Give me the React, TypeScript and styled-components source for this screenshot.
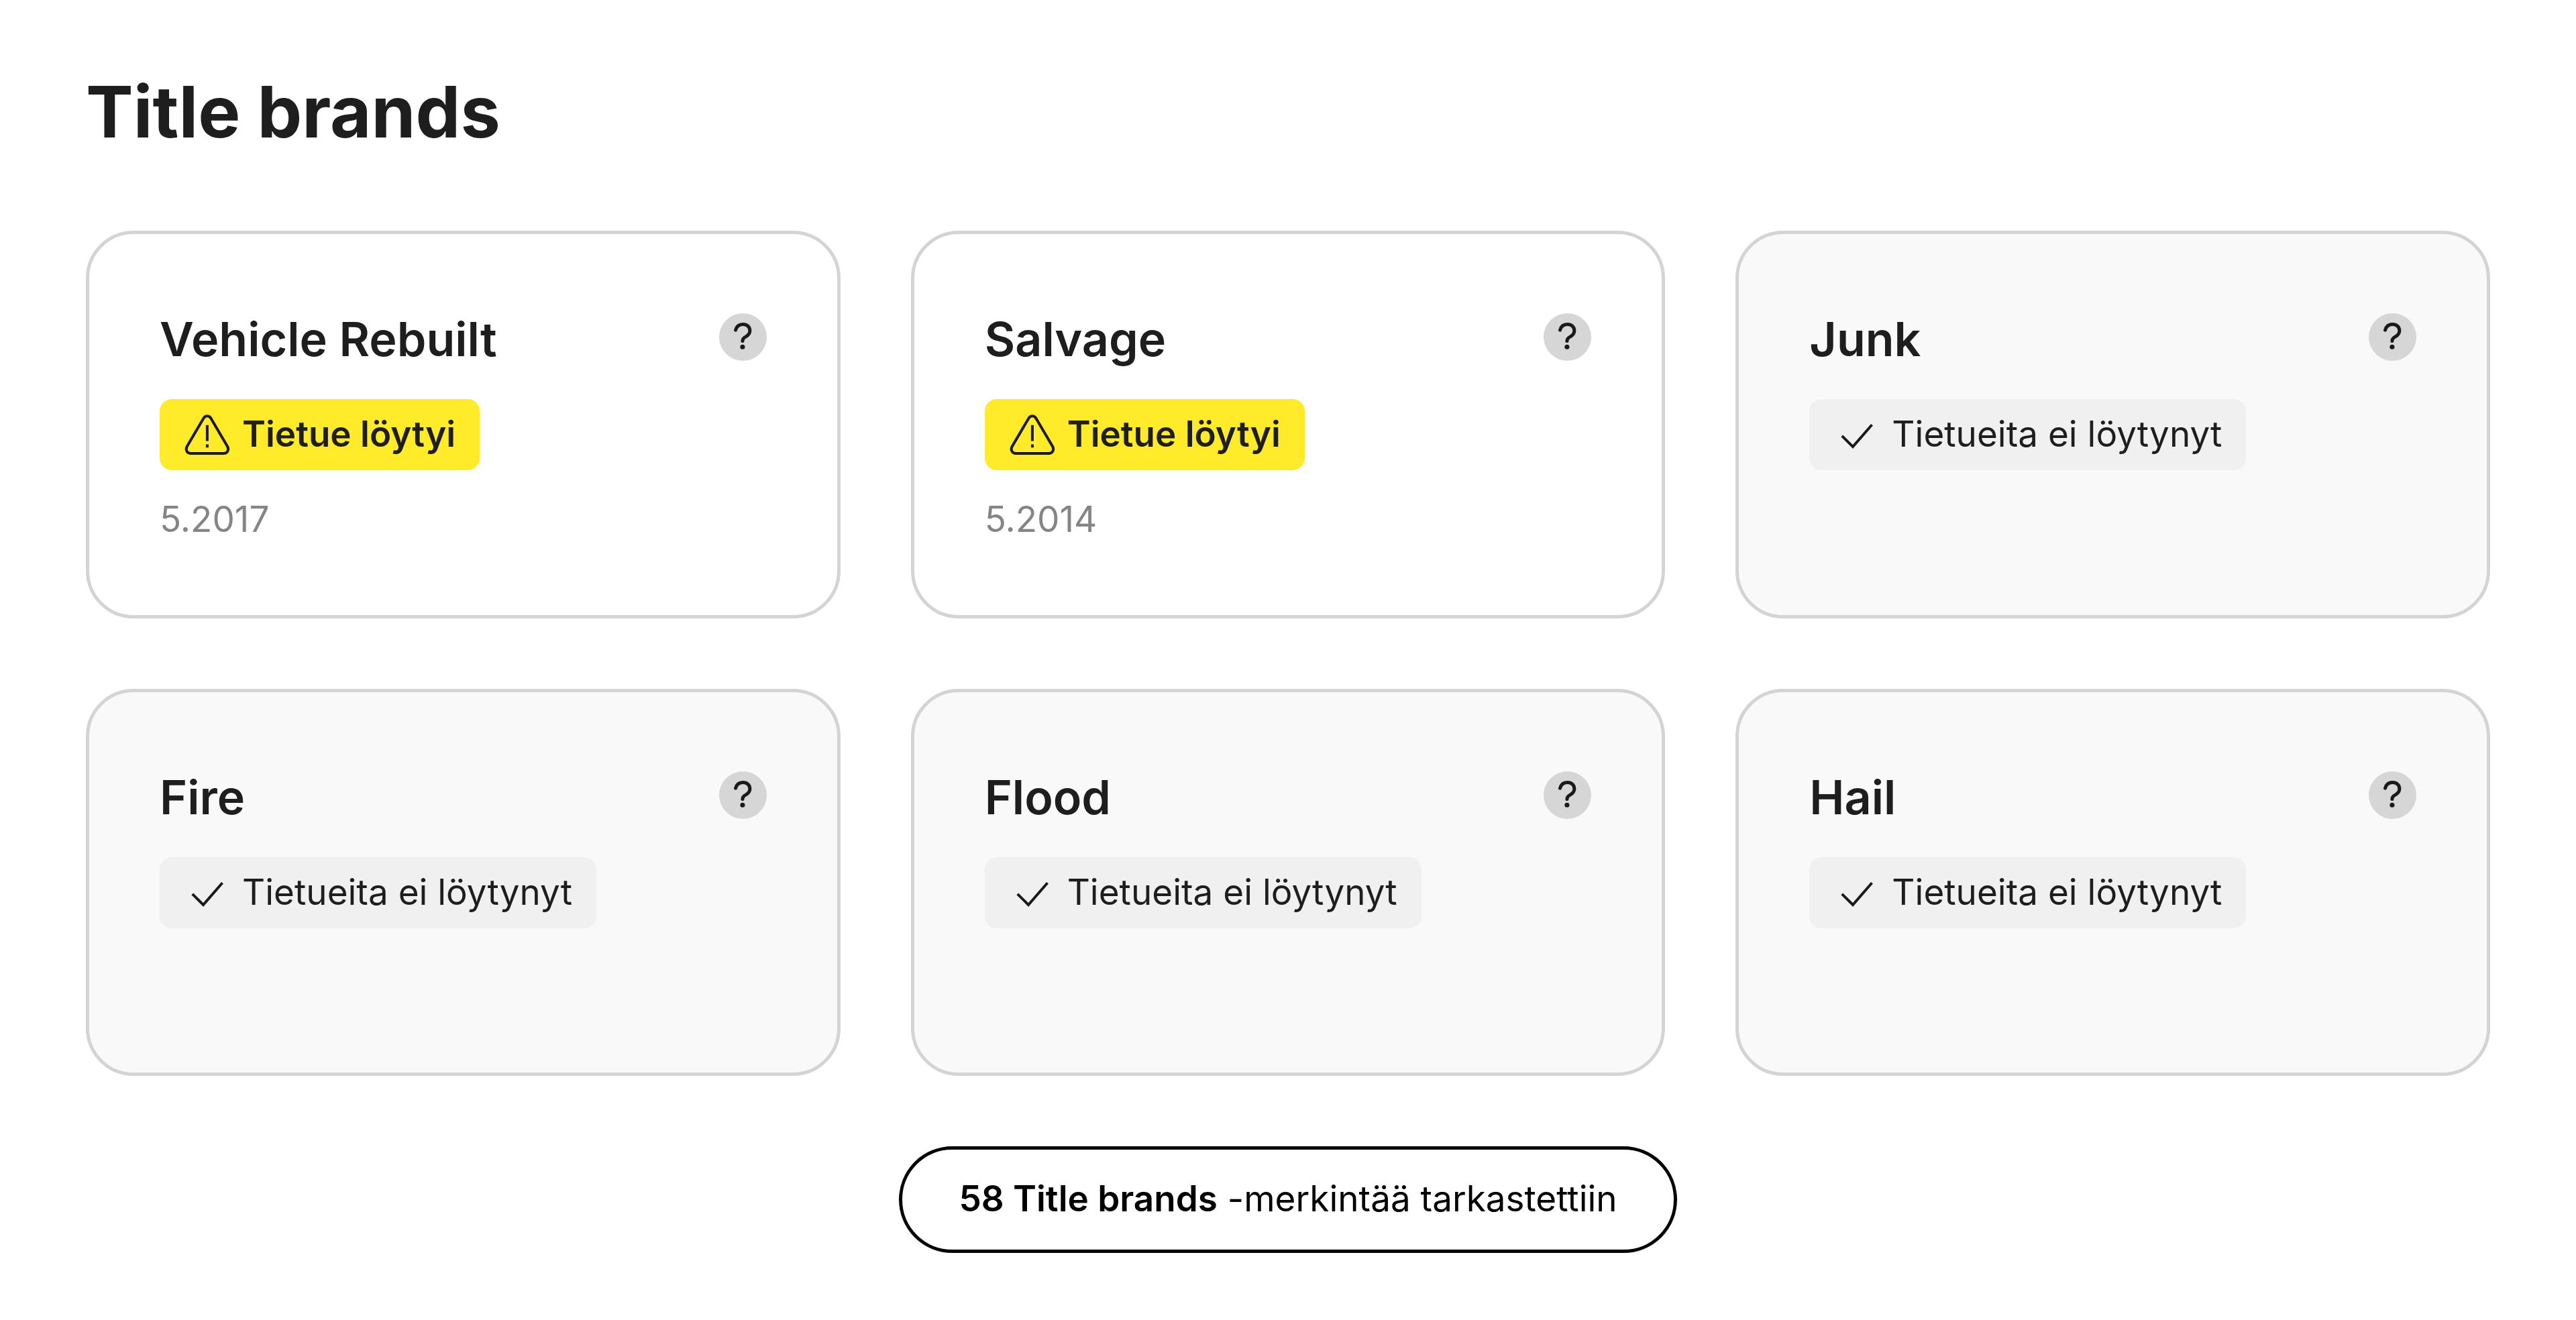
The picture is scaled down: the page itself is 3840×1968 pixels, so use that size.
import React from "react";
import styled, { createGlobalStyle } from "styled-components";

const GlobalStyle = createGlobalStyle`
  *, *::before, *::after { box-sizing: border-box; }
  body {
    margin: 0;
    background: #ffffff;
    color: #1e1e1e;
    font-family: Inter, "Liberation Sans", sans-serif;
    font-variant-ligatures: none;
    font-size: 53px;
    line-height: 75px;
  }
`;

const Section = styled.section`
  padding: 103px 128px 100px;
`;

const Heading = styled.h2`
  margin: 0 0 113px;
  font-size: 106px;
  font-weight: 700;
  line-height: 128px;
`;

const Grid = styled.ul`
  display: grid;
  grid-template-columns: repeat(3, 1fr);
  gap: 105px;
  margin: 0;
  padding: 0;
  list-style: none;
`;

const Card = styled.li<{ $found: boolean }>`
  min-height: 577px;
  padding: 105px;
  border: 5px solid #d4d4d4;
  border-radius: 71px;
  background: ${(p) => (p.$found ? "#ffffff" : "#f9f9f9")};
`;

const CardHeader = styled.div`
  display: flex;
  align-items: flex-start;
  justify-content: space-between;
  margin-bottom: 38px;
`;

const CardTitle = styled.h3`
  margin: 0;
  font-size: 70px;
  font-weight: 600;
  line-height: 103px;
`;

const HelpButton = styled.button`
  display: flex;
  width: 71px;
  height: 71px;
  margin: 13px 0 0;
  padding: 0;
  border: 0;
  border-radius: 50%;
  background: #d6d6d6;
  color: #1a1a1a;
  cursor: pointer;
`;

const Badge = styled.div<{ $found: boolean }>`
  display: flex;
  align-items: center;
  gap: 16px;
  width: fit-content;
  height: 106px;
  padding: 0 36px;
  border-radius: 18px;
  background: ${(p) => (p.$found ? "#ffeb2a" : "#f0f0f0")};
  font-weight: ${(p) => (p.$found ? 600 : 400)};
`;

const BadgeText = styled.span`
  padding-bottom: 2px;
`;

const DateText = styled.p`
  margin: 36px 0 0;
  color: #858585;
`;

const Footer = styled.div`
  display: flex;
  justify-content: center;
  margin-top: 105px;
`;

const SummaryButton = styled.button`
  padding: 36px 84px 38px;
  border: 5px solid #000000;
  border-radius: 80px;
  background: #ffffff;
  color: #000000;
  font: inherit;
  cursor: pointer;
`;

const Strong = styled.strong`
  font-weight: 600;
`;

const QuestionIcon = () => (
  <svg width="71" height="71" viewBox="0 0 24 24" fill="none" aria-hidden="true">
    <path
      d="M8.3 8.5C8.8 6.7 10.2 5.6 12 5.6C14 5.6 15.5 6.9 15.5 8.8C15.5 10.5 14.5 11.2 13.5 11.8C12.4 12.4 11.8 13 11.8 14"
      stroke="currentColor"
      strokeWidth="1.7"
      strokeLinecap="round"
    />
    <circle cx="11.8" cy="17" r="1.2" fill="currentColor" />
  </svg>
);

const WarningIcon = () => (
  <svg width="71" height="71" viewBox="0 0 71 71" fill="none" stroke="#1a1a1a" strokeWidth="4" aria-hidden="true">
    <path d="M29.5 10.5L4.8 52.5C2 57.5 4.7 63 10.3 63H59.5C65.1 63 67.8 57.5 65 52.5L40.3 10.5C37.5 6.2 32.3 6.2 29.5 10.5Z" />
    <path d="M34.9 20.8V44.4M34.9 49.6V54.2" />
  </svg>
);

const CheckIcon = () => (
  <svg width="71" height="71" viewBox="0 0 71 71" fill="none" stroke="#1a1a1a" strokeWidth="4" aria-hidden="true">
    <path d="M12.8 36.8L29 53L57.5 20.2" />
  </svg>
);

type Brand = { name: string; date?: string };

const brands: Brand[] = [
  { name: "Vehicle Rebuilt", date: "5.2017" },
  { name: "Salvage", date: "5.2014" },
  { name: "Junk" },
  { name: "Fire" },
  { name: "Flood" },
  { name: "Hail" },
];

const BrandCard = ({ name, date }: Brand) => {
  const found = Boolean(date);
  return (
    <Card $found={found}>
      <CardHeader>
        <CardTitle>{name}</CardTitle>
        <HelpButton type="button" aria-label={name}>
          <QuestionIcon />
        </HelpButton>
      </CardHeader>
      <Badge $found={found}>
        {found ? <WarningIcon /> : <CheckIcon />}
        <BadgeText>{found ? "Tietue löytyi" : "Tietueita ei löytynyt"}</BadgeText>
      </Badge>
      {date && <DateText>{date}</DateText>}
    </Card>
  );
};

export default function App() {
  return (
    <>
      <GlobalStyle />
      <Section>
        <Heading>Title brands</Heading>
        <Grid>
          {brands.map((brand) => (
            <BrandCard key={brand.name} {...brand} />
          ))}
        </Grid>
        <Footer>
          <SummaryButton type="button">
            <Strong>58 Title brands</Strong> -merkintää tarkastettiin
          </SummaryButton>
        </Footer>
      </Section>
    </>
  );
}
